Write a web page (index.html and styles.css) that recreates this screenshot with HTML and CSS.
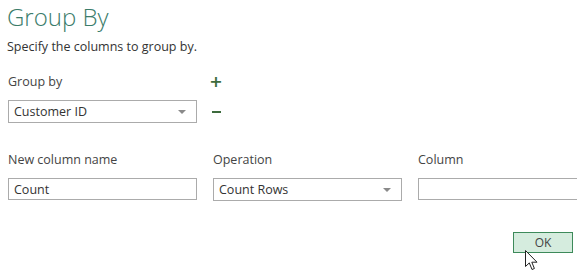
FILE: index.html
```html
<!DOCTYPE html>
<html lang="en">
<head>
    <meta charset="UTF-8">
    <title>Group By</title>
    <link rel="stylesheet" href="styles.css">
</head>
<body>
    <div class="dialog">
        <h1 class="title">Group By</h1>
        <p class="subtitle">Specify the columns to group by.</p>

        <div class="group-section">
            <div class="label">Group by</div>
            <button class="icon-button plus" title="Add">+</button>
            <div class="select">
                <span>Customer ID</span>
                <span class="arrow"></span>
            </div>
            <button class="icon-button minus" title="Remove"><span class="bar"></span></button>
        </div>

        <div class="agg-section">
            <div class="field">
                <div class="label">New column name</div>
                <div class="input">Count</div>
            </div>
            <div class="field">
                <div class="label">Operation</div>
                <div class="select">
                    <span>Count Rows</span>
                    <span class="arrow"></span>
                </div>
            </div>
            <div class="field">
                <div class="label">Column</div>
                <div class="input"></div>
            </div>
        </div>

        <div class="footer">
            <button class="ok-button">OK</button>
        </div>

        <!-- mouse pointer -->
        <svg class="cursor" width="13" height="21" viewBox="0 0 13 21">
            <path d="M0.5 0.5 L0.5 16.5 L4.3 12.9 L7 19.5 L9.4 18.5 L6.8 12.2 L12 12.2 Z" fill="#fff" stroke="#222" stroke-width="1" stroke-linejoin="round"/>
        </svg>
    </div>
</body>
</html>
```

FILE: styles.css
```css
body {
    margin: 0;
    background-color: #ffffff;
    font-family: "Open Sans", "Noto Sans", sans-serif;
    color: #333333;
    overflow: hidden;
}

.dialog {
    position: relative;
    width: 577px;
    height: 272px;
    padding: 0 0 0 8px;
    box-sizing: border-box;
    overflow: hidden;
}

.title {
    margin: 0 0 0 -1px;
    padding-top: 3px;
    font-size: 24px;
    font-weight: 300;
    line-height: 28px;
    color: #3b7c6a;
}

.subtitle {
    margin: 7px 0 0 -1px;
    font-size: 12.5px;
    line-height: 18px;
    color: #333333;
}

.label {
    font-size: 12.5px;
    line-height: 18px;
    color: #444444;
}

.group-section {
    display: grid;
    grid-template-columns: 189px 30px;
    column-gap: 12px;
    row-gap: 9px;
    margin-top: 17px;
    align-items: center;
}

.icon-button {
    background: none;
    border: none;
    padding: 0;
    width: 14px;
    height: 14px;
    color: #3d6b3d;
    font-family: "DejaVu Sans", sans-serif;
    font-size: 16px;
    font-weight: bold;
    line-height: 14px;
    cursor: pointer;
    display: flex;
    align-items: center;
    justify-content: center;
}

.minus .bar {
    display: block;
    width: 9px;
    height: 2px;
    background-color: #3d6b3d;
}

.select,
.input {
    height: 22px;
    border: 1px solid #ababab;
    box-sizing: border-box;
    display: flex;
    align-items: center;
    justify-content: space-between;
    padding: 0 8px 0 5px;
    font-size: 12.5px;
    color: #333333;
    background-color: #ffffff;
}

.select {
    height: 23px;
}

.arrow {
    width: 0;
    height: 0;
    border-left: 4px solid transparent;
    border-right: 4px solid transparent;
    border-top: 4px solid #8a8a8a;
    margin-right: 2px;
}

.agg-section {
    display: grid;
    grid-template-columns: 189px 189px 189px;
    column-gap: 16px;
    margin-top: 28px;
}

.field .label {
    margin-bottom: 9px;
}

.footer {
    display: flex;
    justify-content: flex-end;
    padding-right: 4px;
    margin-top: 31px;
}

.ok-button {
    width: 60px;
    height: 21px;
    border: 1px solid #3d8a5a;
    background-color: #d5ecde;
    color: #444444;
    font-family: "Open Sans", "Noto Sans", sans-serif;
    font-size: 12px;
    padding: 0;
    cursor: pointer;
}

.cursor {
    position: absolute;
    left: 525px;
    top: 250px;
}
```
